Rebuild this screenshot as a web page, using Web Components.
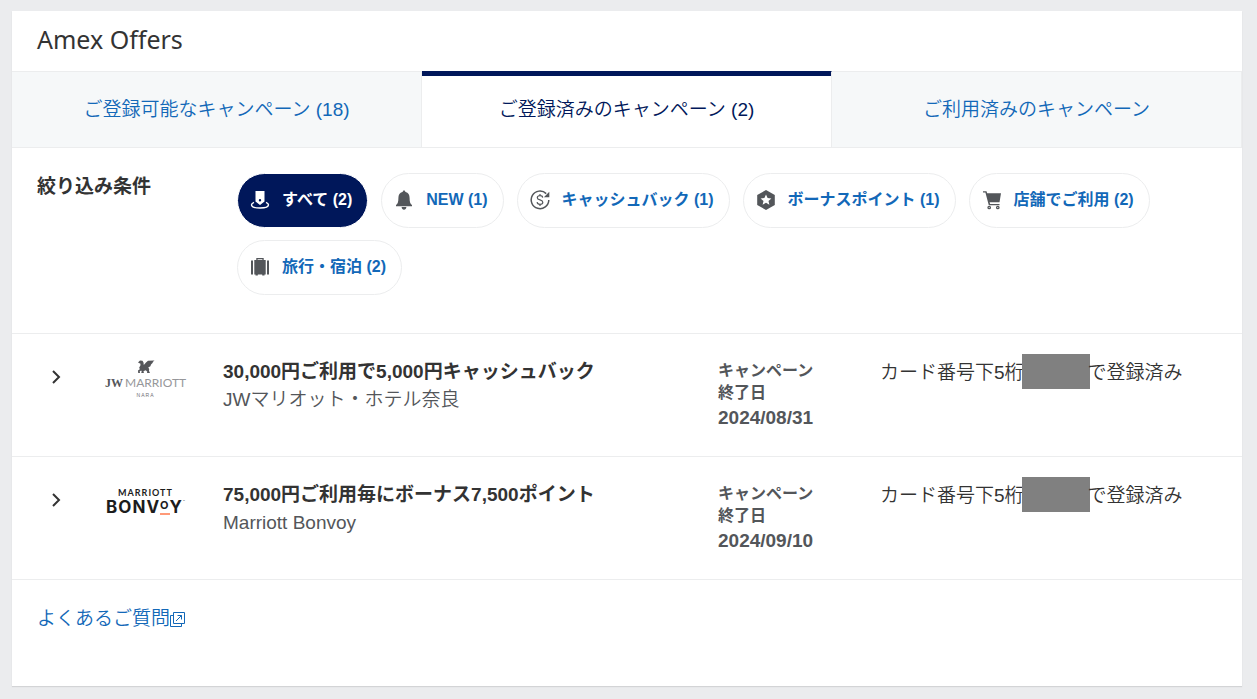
<!DOCTYPE html>
<html lang="ja">
<head>
<meta charset="utf-8">
<meta name="viewport" content="width=device-width, initial-scale=1">
<title>Amex Offers</title>
<style>
  html { background: #ebecee; }
  body {
    margin: 0;
    padding: 11px 15px 12px 12px;
    font-family: "Liberation Sans", "Noto Sans CJK JP", sans-serif;
    font-size: 19px;
    line-height: 28px;
    color: #333;
    --navy: #00175a;
    --link: #1268b8;
    --line: #ecedee;
    --muted: #53565a;
    --thin: 350;
  }
</style>
</head>
<body>
<offers-panel heading="Amex Offers">
  <offer-tabs slot="tabs">
    <offer-tab>ご登録可能なキャンペーン (18)</offer-tab>
    <offer-tab active>ご登録済みのキャンペーン (2)</offer-tab>
    <offer-tab>ご利用済みのキャンペーン</offer-tab>
  </offer-tabs>
  <offer-filters label="絞り込み条件">
    <filter-chip icon="all" active>すべて (2)</filter-chip>
    <filter-chip icon="bell">NEW (1)</filter-chip>
    <filter-chip icon="cash">キャッシュバック (1)</filter-chip>
    <filter-chip icon="bonus">ボーナスポイント (1)</filter-chip>
    <filter-chip icon="cart">店舗でご利用 (2)</filter-chip>
    <filter-chip icon="travel">旅行・宿泊 (2)</filter-chip>
  </offer-filters>
  <offer-row>
    <jw-logo slot="logo"></jw-logo>
    <span slot="title">30,000円ご利用で5,000円キャッシュバック</span>
    <span slot="merchant">JWマリオット・ホテル奈良</span>
    <time slot="date" datetime="2024-08-31">2024/08/31</time>
  </offer-row>
  <offer-row>
    <bonvoy-logo slot="logo"></bonvoy-logo>
    <span slot="title">75,000円ご利用毎にボーナス7,500ポイント</span>
    <span slot="merchant">Marriott Bonvoy</span>
    <time slot="date" datetime="2024-09-10">2024/09/10</time>
  </offer-row>
  <faq-link slot="footer" href="#faq">よくあるご質問</faq-link>
</offers-panel>

<script>
const define = (name, markup, setup) => {
  const template = document.createElement('template');
  template.innerHTML = markup;
  customElements.define(name, class extends HTMLElement {
    constructor() {
      super();
      this.attachShadow({ mode: 'open' }).append(template.content.cloneNode(true));
    }
    connectedCallback() {
      if (setup) setup(this, this.shadowRoot);
    }
  });
};

const icons = {
  all: `<path fill="currentColor" fill-rule="evenodd" d="M5.500 1h9v10.500L10 15l-4.500-3.500zM10 9a1.200 1.200 0 1 0 0 2.400A1.200 1.200 0 0 0 10 9z"/>
        <path fill="none" stroke="currentColor" stroke-width="1.400" d="M4 12.300C2.300 13 1.500 13.900 1.500 14.800c0 1.900 3.800 3.200 8.500 3.200s8.500-1.300 8.500-3.200c0-.9-.8-1.800-2.500-2.500"/>`,
  bell: `<path fill="currentColor" d="M10 0l1.600 2c2.700.7 4 2.900 4 5.900 0 4 .6 5.600 2.400 7v1.400H2v-1.400c1.800-1.400 2.400-3 2.400-7 0-3 1.300-5.200 4-5.900zM7.600 17h4.800c-.2 1.800-1.100 2.700-2.400 2.700S7.800 18.800 7.600 17z"/>`,
  cash: `<path fill="none" stroke="currentColor" stroke-width="1.500" d="M16.200 3.600A8.800 8.800 0 1 0 18.800 10"/>
        <path fill="currentColor" d="M19.300 1.800v5.400h-5.400z"/>
        <path fill="none" stroke="currentColor" stroke-width="1.200" d="M12.700 7.600C12.500 6.300 11.500 5.700 10 5.700S7.300 6.500 7.300 7.700c0 3 5.500 1.500 5.500 4.500 0 1.300-1.200 2.100-2.800 2.100s-2.700-.7-2.900-2.100M10 4v1.700M10 14.300V16"/>`,
  bonus: `<path fill="currentColor" fill-rule="evenodd" d="M10 0l8.800 5v10L10 20l-8.800-5V5zM10 4.500L8.400 8 4.600 8.400l2.900 2.500-.9 3.800L10 12.700l3.400 2-.9-3.800 2.900-2.500-3.800-.4z"/>`,
  cart: `<path fill="currentColor" d="M1 1.200h3.500l.7 2H19l-1.500 9H7.600l.5 1.700h9.400v1.300H6.800L3.400 2.500H1z"/>
        <g fill="none" stroke="currentColor" stroke-width="1.300"><circle cx="7.200" cy="17.500" r="1.200"/><circle cx="15.800" cy="17.500" r="1.200"/></g>`,
  travel: `<path fill="currentColor" fill-rule="evenodd" d="M6.300 3V1h7.400v2h2v14.500h-1.200v1h-2.300v-1H7.800v1H5.500v-1H4.300V3zm1.300 0h4.800v-.8H7.600zM1 3.500h2v14H1zM17 3.500h2v14h-2z"/>`
};

define('offers-panel', `
  <style>
    :host { display: block; background: #fff; box-shadow: 0 1px 1px #d3d4d6; }
    h1 { margin: 0; padding: 11px 25px 15px; font: 400 25px/34px "Noto Sans", sans-serif; color: #333; }
    footer { padding: 25px 25px 53px; }
  </style>
  <section>
    <h1></h1>
    <slot name="tabs"></slot>
    <slot></slot>
    <footer><slot name="footer"></slot></footer>
  </section>`, (host, root) => {
  root.querySelector('h1').textContent = host.getAttribute('heading');
});

define('offer-tabs', `
  <style>
    :host { display: block; }
    div { display: grid; grid-template-columns: repeat(3, 1fr); }
  </style>
  <div><slot></slot></div>`);

define('offer-tab', `
  <style>
    :host { display: block; }
    button {
      box-sizing: border-box; width: 100%; height: 77px; margin: 0; padding: 1px 0 0;
      border: 1px solid var(--line); border-left-width: 0;
      background: #f6f8f9; color: var(--link);
      font: inherit; font-weight: var(--thin); cursor: pointer;
    }
    :host([active]) { box-shadow: inset 0 5px var(--navy); }
    :host([active]) button { border-top-color: transparent; background: none; color: var(--navy); }
  </style>
  <button type="button"><slot></slot></button>`, (host, root) => {
  root.querySelector('button').setAttribute('aria-pressed', host.hasAttribute('active'));
});

define('offer-filters', `
  <style>
    :host {
      display: grid; grid-template-columns: 200px 1fr;
      padding: 25px 25px 38px; border-bottom: 1px solid var(--line);
    }
    h2 { margin: 0; font-size: 19px; line-height: 28px; font-weight: 700; }
    div { display: flex; flex-wrap: wrap; gap: 12px 13px; }
  </style>
  <h2></h2>
  <div role="group"><slot></slot></div>`, (host, root) => {
  root.querySelector('h2').textContent = host.getAttribute('label');
  root.querySelector('div').setAttribute('aria-label', host.getAttribute('label'));
});

define('filter-chip', `
  <style>
    :host { display: block; }
    button {
      display: flex; align-items: center; gap: 12px; box-sizing: border-box;
      height: 55px; margin: 0; padding: 0 15px 2px 12px;
      border: 1px solid var(--line); border-radius: 28px;
      background: #fff; color: var(--link);
      font: inherit; font-size: 16px; font-weight: 700; line-height: 24px;
      white-space: nowrap; cursor: pointer;
    }
    svg { width: 20px; height: 20px; color: var(--muted); }
    :host([active]) button { background: var(--navy); color: #fff; border-color: #fff; }
    :host([active]) svg { color: #fff; }
  </style>
  <button type="button">
    <svg viewBox="0 0 20 20" aria-hidden="true"></svg>
    <span><slot></slot></span>
  </button>`, (host, root) => {
  root.querySelector('svg').innerHTML = icons[host.getAttribute('icon')];
  root.querySelector('button').setAttribute('aria-pressed', host.hasAttribute('active'));
});

define('offer-row', `
  <style>
    :host {
      display: grid; grid-template-columns: 93px 118px 1fr 162px 362px;
      padding: 20px 0 24px; border-bottom: 1px solid var(--line);
    }
    button {
      justify-self: start; align-self: start;
      display: grid; place-items: center; width: 28px; height: 28px;
      margin: 9px 0 0 30px; padding: 0; border: 0; background: none; color: #333; cursor: pointer;
    }
    button svg { width: 14px; height: 14px; }
    .offer { padding-top: 4px; display: grid; align-content: start; }
    .title { font-weight: 700; }
    .merchant { color: var(--muted); font-weight: var(--thin); }
    .expiry { padding-top: 6px; font-weight: 700; color: var(--muted); display: grid; align-content: start; }
    .label { font-size: 16px; line-height: 22px; }
    .card { display: flex; align-items: center; align-self: start; font-weight: var(--thin); white-space: nowrap; }
    .card span { padding-top: 2px; }
    .card i { width: 68px; height: 35px; margin: 0 -2px; background: #808080; }
  </style>
  <button type="button" aria-label="詳細を表示">
    <svg viewBox="0 0 14 14" aria-hidden="true"><path d="M4 1l6 6-6 6" fill="none" stroke="currentColor" stroke-width="2"/></svg>
  </button>
  <slot name="logo"></slot>
  <div class="offer">
    <div class="title"><slot name="title"></slot></div>
    <div class="merchant"><slot name="merchant"></slot></div>
  </div>
  <div class="expiry">
    <div class="label">キャンペーン<br>終了日</div>
    <slot name="date"></slot>
  </div>
  <div class="card"><span>カード番号下5桁</span><i></i><span>で登録済み</span></div>`);

define('jw-logo', `
  <style>
    :host { display: grid; justify-items: center; align-content: start; width: 81px; padding-top: 6px; color: #55565a; }
    svg { width: 18px; height: 14px; }
    .name { display: flex; align-items: baseline; gap: 2px; margin-top: 1px; font: 400 12px/16px Lato, sans-serif; color: #96979a; }
    b { font: 700 12px/16px "Liberation Serif", serif; color: #55565a; }
    small { font: 400 5px/8px "Liberation Sans", sans-serif; letter-spacing: 1px; color: #6f7074; }
  </style>
  <svg viewBox="0 0 18 14" aria-hidden="true"><path fill="currentColor" d="M1 2.500L3 .5l2.500.3L6.500 2.500 6.800 5 9 2.500 11 .8 17.500.5l-2 1.800.5.3-2 2-.6 1.600-2.200 1.400 1 1.400-.2 2 1 2H10l.3-1.200-1.500-1.500-2 .8-.3.700.5 1.200H4.200l.5-1.500-.5-1-1.500.8.3 1.700H1.200L1 10.500 2.800 9.300 2.200 7.500l1.100-1.700.2-2z"/></svg>
  <div class="name"><b>JW</b><span>MARRIOTT</span></div>
  <small>NARA</small>`);

define('bonvoy-logo', `
  <style>
    :host { display: grid; justify-items: center; align-content: start; width: 81px; padding-top: 10px; color: #1c1c1c; }
    .top { font: 700 9px/11px Lato, sans-serif; letter-spacing: 1px; }
    .main { display: flex; font: 700 17px/18px Inter, sans-serif; letter-spacing: 1px; }
    .o { box-sizing: border-box; height: 17px; font-size: 11px; line-height: 14px; border-bottom: 2px solid #ff9a78; }
    sup { font-size: 3px; line-height: 8px; font-weight: 400; letter-spacing: 0; }
  </style>
  <div class="top">MARRIOTT</div>
  <div class="main"><span>BONV</span><span class="o">O</span><span>Y</span><sup>™</sup></div>`);

define('faq-link', `
  <style>
    :host { display: block; }
    a { display: inline-flex; align-items: center; color: var(--link); font-weight: var(--thin); text-decoration: none; }
    svg { width: 15px; height: 15px; }
  </style>
  <a><slot></slot><svg viewBox="0 0 15 15" aria-hidden="true"><g fill="none" stroke="currentColor"><path d="M3.500.500h11v11h-11z"/><path d="M3.500 3.500h-3v11h11v-3"/><path d="M6 9l5.500-5.500M7.500 3.500h4v4"/></g></svg></a>`, (host, root) => {
  root.querySelector('a').href = host.getAttribute('href');
});
</script>
</body>
</html>
